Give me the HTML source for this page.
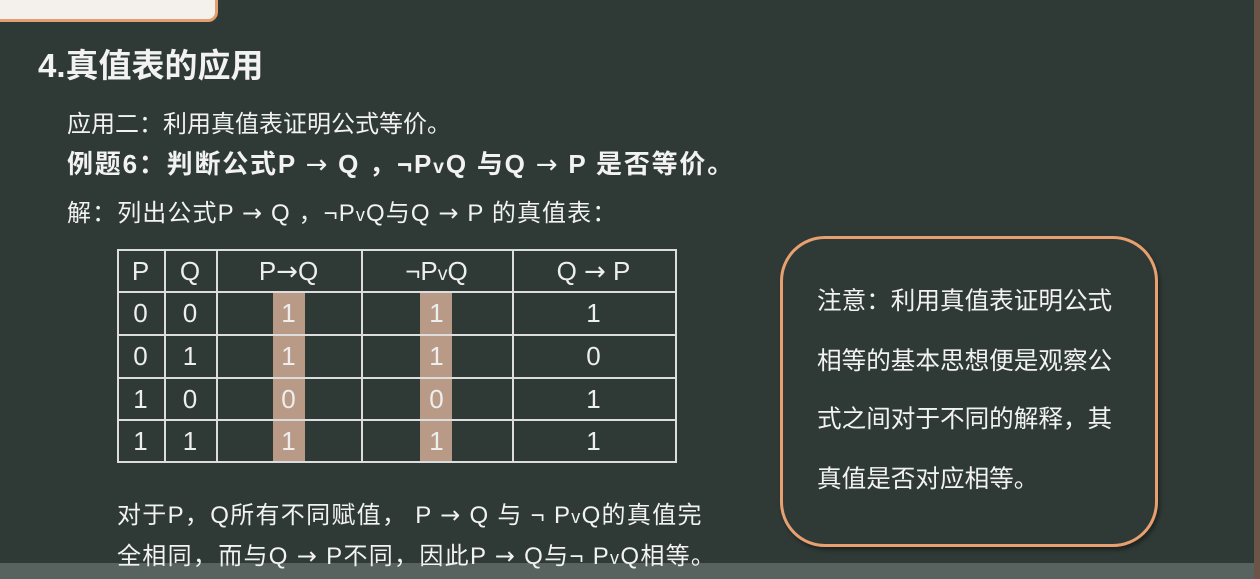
<!DOCTYPE html><html><head><meta charset="utf-8"><style>
body{margin:0;width:1260px;height:579px;overflow:hidden;background:#2f3a37;font-family:"Liberation Sans","Noto Sans CJK SC",sans-serif;color:#f2f2f2;position:relative}
.a{position:absolute;white-space:nowrap;line-height:1}
.cell{position:absolute;text-align:center;font-size:26px;line-height:42px;color:#eee}
.hl{position:absolute;background:#b89a86;width:32px;top:291px;height:171px}
.l{position:absolute;background:#ddd}
.o{font-size:0.75em}
.r{font-family:"DejaVu Sans",sans-serif;font-weight:normal}
</style></head><body>
<div style="position:absolute;left:-20px;top:-20px;width:232px;height:36px;background:#f4f1ec;border:3px solid #e0a070;border-radius:10px"></div>
<div style="position:absolute;left:0;top:563px;width:1260px;height:16px;background:#58625f"></div>
<div style="position:absolute;left:1254px;top:0;width:6px;height:579px;background:#6b5448"></div>
<div class="a" style="left:38px;top:49px;font-size:33px;font-weight:bold">4.真值表的应用</div>
<div class="a" style="left:67px;top:113px;font-size:24px">应用二：利用真值表证明公式等价。</div>
<div class="a" style="left:67px;top:151px;font-size:26px;font-weight:bold;letter-spacing:1.8px">例题6：判断公式P <span class="r">→</span> Q ，¬P<span class="o">v</span>Q 与Q <span class="r">→</span> P 是否等价。</div>
<div class="a" style="left:67px;top:201px;font-size:24px;letter-spacing:1.1px">解：列出公式P <span class="r">→</span> Q ，¬P<span class="o">v</span>Q与Q <span class="r">→</span> P 的真值表：</div>
<div class="hl" style="left:273px"></div><div class="hl" style="left:420px"></div>
<div class="l" style="left:117px;top:249px;width:559px;height:2px"></div>
<div class="l" style="left:117px;top:291px;width:559px;height:2px"></div>
<div class="l" style="left:117px;top:334px;width:559px;height:2px"></div>
<div class="l" style="left:117px;top:377px;width:559px;height:2px"></div>
<div class="l" style="left:117px;top:419px;width:559px;height:2px"></div>
<div class="l" style="left:117px;top:461px;width:559px;height:2px"></div>
<div class="l" style="left:117px;top:249px;width:2px;height:214px"></div>
<div class="l" style="left:164px;top:249px;width:2px;height:214px"></div>
<div class="l" style="left:216px;top:249px;width:2px;height:214px"></div>
<div class="l" style="left:361px;top:249px;width:2px;height:214px"></div>
<div class="l" style="left:512px;top:249px;width:2px;height:214px"></div>
<div class="l" style="left:675px;top:249px;width:2px;height:214px"></div>
<div id="t"></div>
<script>
var cols=[[117,164],[164,216],[216,361],[361,512],[512,675]];
var rows=[["P","Q","P<span class='r'>→</span>Q","¬P<span class='o'>v</span>Q","Q <span class='r'>→</span> P"],["0","0","1","1","1"],["0","1","1","1","0"],["1","0","0","0","1"],["1","1","1","1","1"]];
var ys=[250,292,335,378,420];var h="";
rows.forEach(function(r,i){r.forEach(function(c,j){h+='<div class="cell" style="left:'+cols[j][0]+'px;width:'+(cols[j][1]-cols[j][0])+'px;top:'+ys[i]+'px">'+c+'</div>';});});
document.getElementById("t").innerHTML=h;
</script>
<div class="a" style="left:117px;top:503px;font-size:24px;letter-spacing:1.3px">对于P，Q所有不同赋值， P <span class="r">→</span> Q 与 ¬ P<span class="o">v</span>Q的真值完</div>
<div class="a" style="left:117px;top:544px;font-size:24px;letter-spacing:1.3px">全相同，而与Q <span class="r">→</span> P不同，因此P <span class="r">→</span> Q与¬ P<span class="o">v</span>Q相等。</div>
<div style="position:absolute;left:780px;top:236px;width:372px;height:305px;border:3px solid #e8a070;border-radius:45px;box-shadow:2px 3px 4px rgba(0,0,0,.4)"></div>
<div class="a" style="left:817px;top:290px;font-size:24.6px">注意：利用真值表证明公式</div>
<div class="a" style="left:817px;top:350px;font-size:24.6px">相等的基本思想便是观察公</div>
<div class="a" style="left:817px;top:408px;font-size:24.6px">式之间对于不同的解释，其</div>
<div class="a" style="left:817px;top:468px;font-size:24.6px">真值是否对应相等。</div>
</body></html>
